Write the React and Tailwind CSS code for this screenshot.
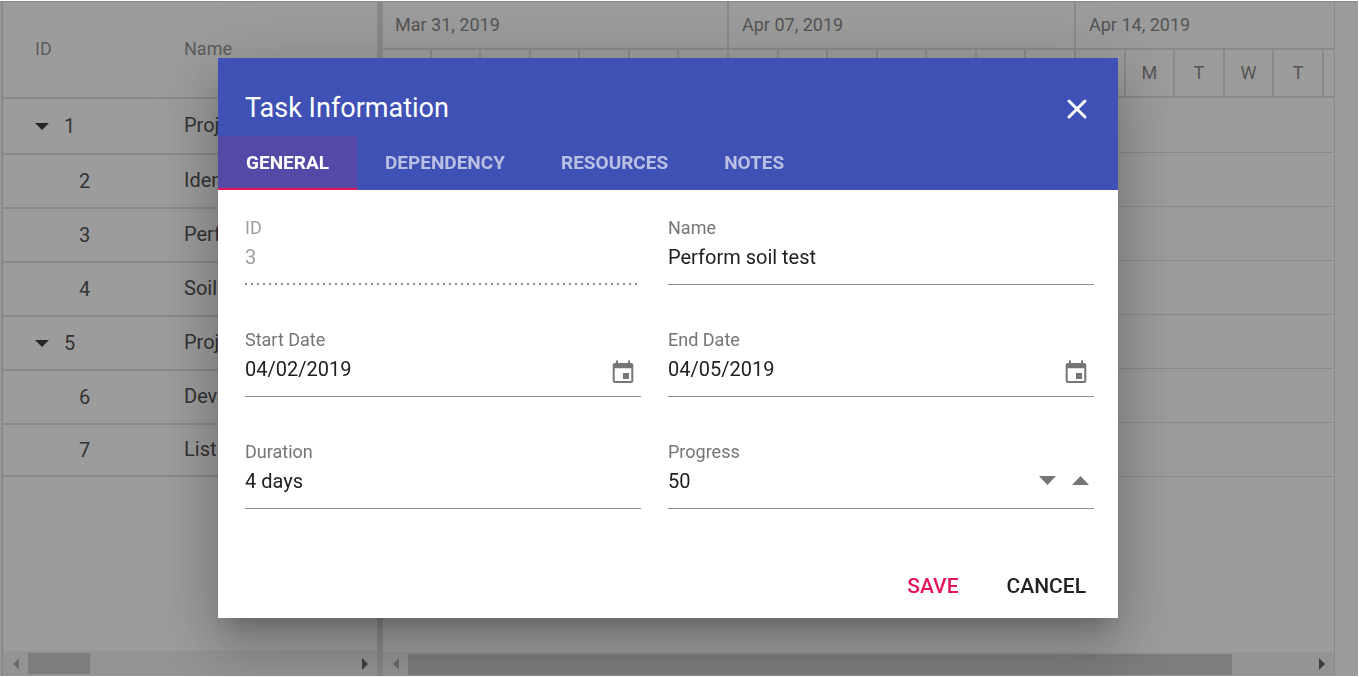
import React, { useState } from "react";

const tasks = [
  { id: 1, name: "Project Initiation", parent: true },
  { id: 2, name: "Identify Site location" },
  { id: 3, name: "Perform soil test" },
  { id: 4, name: "Soil test approval" },
  { id: 5, name: "Project Estimation", parent: true },
  { id: 6, name: "Develop floor plan" },
  { id: 7, name: "List materials" },
];

const weeks = ["Mar 31, 2019", "Apr 07, 2019", "Apr 14, 2019"];
const days = ["S", "M", "T", "W", "T", "F", "S"];
const tabs = ["GENERAL", "DEPENDENCY", "RESOURCES", "NOTES"];

function Triangle({ points, className }) {
  return (
    <svg viewBox="0 0 16 16" className={className} fill="currentColor" aria-hidden="true">
      <polygon points={points} />
    </svg>
  );
}

function ScrollBar({ thumb, className }) {
  return (
    <div className={`flex shrink-0 items-center bg-[#949494] ${className}`}>
      <span className="flex w-[25px] shrink-0 justify-center text-[#6c6c6c]">
        <Triangle points="11,2 11,14 5,8" className="size-4" />
      </span>
      <div className="flex h-[21px] min-w-0 flex-1">
        <div className={`h-full bg-[#7d7d7d] ${thumb}`} />
      </div>
      <span className="flex w-[25px] shrink-0 justify-center text-[#3f3f3f]">
        <Triangle points="5,2 5,14 11,8" className="size-4" />
      </span>
    </div>
  );
}

function TaskGrid() {
  return (
    <section className="flex w-[374px] shrink-0 flex-col overflow-hidden">
      <table className="w-full table-fixed border-separate border-spacing-0 text-left">
        <thead>
          <tr className="text-[18px] text-[#5c5c5c]">
            <th className="h-[97px] w-[149px] border-b-2 border-[#8a8a8a] p-0 pb-0.5 pl-8 font-normal">ID</th>
            <th className="border-b-2 border-[#8a8a8a] p-0 pb-0.5 pl-8 font-normal">Name</th>
          </tr>
        </thead>
        <tbody className="text-[20px] text-[#333]">
          {tasks.map((t) => (
            <tr key={t.id} className="h-[54px] first:h-[56px] last:h-[52px]">
              <td className="border-b-2 border-[#8a8a8a] p-0">
                {t.parent ? (
                  <div className="flex items-center gap-[15px] pl-8">
                    <button type="button" aria-label={`Collapse task ${t.id}`} className="text-[#262626]">
                      <svg viewBox="0 0 14 8" className="h-2 w-3.5" fill="currentColor" aria-hidden="true">
                        <polygon points="0,1 14,1 7,8" />
                      </svg>
                    </button>
                    <span>{t.id}</span>
                  </div>
                ) : (
                  <div className="pl-[76px]">{t.id}</div>
                )}
              </td>
              <td className="truncate border-b-2 border-[#8a8a8a] p-0 pb-0.5 pl-8">{t.name}</td>
            </tr>
          ))}
        </tbody>
      </table>
      <ScrollBar className="mt-auto h-[25px]" thumb="w-[62px]" />
    </section>
  );
}

function Timeline() {
  return (
    <section className="flex min-w-0 flex-1 flex-col overflow-hidden border-r border-[#8a8a8a]">
      <div className="-ml-px flex">
        {weeks.map((w) => (
          <div key={w} className="w-[347px] shrink-0">
            <div className="flex h-12 items-center border-r-2 border-b-2 border-[#8a8a8a] pb-0.5 pl-[13px] text-[18px] text-[#545454]">
              {w}
            </div>
            <div className="grid grid-cols-7">
              {days.map((d, i) => (
                <div
                  key={i}
                  className="flex h-12 items-center justify-center border-r-2 border-b-2 border-[#8a8a8a] pb-0.5 text-[18px] text-[#545454]"
                >
                  {d}
                </div>
              ))}
            </div>
          </div>
        ))}
      </div>
      {tasks.map((t) => (
        <div key={t.id} className="h-[54px] border-b border-[#8a8a8a] nth-2:h-[55px]" />
      ))}
      <ScrollBar className="mt-auto h-6" thumb="w-[91.4%]" />
    </section>
  );
}

function CalendarIcon() {
  return (
    <svg viewBox="0 0 22 24" className="h-6 w-[22px]" aria-hidden="true">
      <path
        fill="#757575"
        fillRule="evenodd"
        d="M4 0.5h2V3h10V0.5h2V3h1a2.3 2.3 0 0 1 2.3 2.3v15.4A2.3 2.3 0 0 1 19 23H3a2.3 2.3 0 0 1-2.300-2.300V5.300A2.300 2.300 0 0 1 3 3h1zM2.700 8.300v12.700h16.600V8.300zM11 13h6v6h-6z"
      />
    </svg>
  );
}

function Field({ id, label, value, disabled, children }) {
  return (
    <div
      className={
        disabled ? "mr-[3px] text-[#9e9e9e]" : "border-b border-[#8c8c8c] text-[#757575]"
      }
    >
      <label htmlFor={id} className="block text-[18px] leading-5">
        {label}
      </label>
      <div className={`flex items-start ${disabled ? "h-[45px]" : "h-[46px]"}`}>
        <input
          id={id}
          defaultValue={value}
          disabled={disabled}
          className={`h-[38px] min-w-0 flex-1 bg-transparent text-[20px] outline-none ${disabled ? "text-[#9e9e9e]" : "text-[#212121]"}`}
        />
        {children}
      </div>
      {disabled && (
        <svg className="block h-0.5 w-full" aria-hidden="true">
          <line x1="0" y1="1" x2="100%" y2="1" stroke="#8c8c8c" strokeWidth="2" strokeDasharray="2 4" />
        </svg>
      )}
    </div>
  );
}

function DateButton({ label }) {
  return (
    <button type="button" aria-label={label} className="mt-[10px] mr-[7px]">
      <CalendarIcon />
    </button>
  );
}

function TaskDialog() {
  const [active, setActive] = useState("GENERAL");
  return (
    <div
      role="dialog"
      aria-labelledby="dialog-title"
      className="w-[900px] max-w-full bg-white shadow-[0_15px_20px_-9px_rgba(0,0,0,0.2),0_32px_51px_4px_rgba(0,0,0,0.14),0_12px_62px_11px_rgba(0,0,0,0.12)]"
    >
      <header className="bg-[#3f51b5] text-white">
        <div className="flex h-[78px] items-center justify-between pt-[22px] pr-[30px] pl-[27px]">
          <h2 id="dialog-title" className="text-[27px]">
            Task Information
          </h2>
          <button type="button" aria-label="Close" className="pt-0.5">
            <svg viewBox="0 0 22 22" className="size-[22px]" aria-hidden="true">
              <path d="M3 3l16 16M19 3L3 19" stroke="currentColor" strokeWidth="3" strokeLinecap="round" />
            </svg>
          </button>
        </div>
        <div role="tablist" className="flex">
          {tabs.map((t) => (
            <button
              key={t}
              type="button"
              role="tab"
              aria-selected={t === active}
              onClick={() => setActive(t)}
              className={`h-[54px] border-b-2 px-7 pt-0.5 text-[19px] font-bold ${
                t === active ? "border-[#e3165b] bg-[#5549a8] text-white" : "border-transparent text-[#b9c0e4]"
              }`}
            >
              {t}
            </button>
          ))}
        </div>
      </header>
      <form onSubmit={(e) => e.preventDefault()}>
        <div className="grid grid-cols-[396fr_426fr] gap-x-[27px] gap-y-[45px] pt-7 pr-6 pl-[27px]">
          <Field id="task-id" label="ID" value="3" disabled />
          <Field id="task-name" label="Name" value="Perform soil test" />
          <Field id="task-start" label="Start Date" value="04/02/2019">
            <DateButton label="Choose start date" />
          </Field>
          <Field id="task-end" label="End Date" value="04/05/2019">
            <DateButton label="Choose end date" />
          </Field>
          <Field id="task-duration" label="Duration" value="4 days" />
          <Field id="task-progress" label="Progress" value="50">
            <div className="mt-3 mr-[5px] flex gap-4 text-[#757575]">
              <button type="button" aria-label="Decrease progress">
                <svg viewBox="0 0 17 12" className="h-3 w-[17px]" fill="currentColor" aria-hidden="true">
                  <polygon points="0,2 17,2 8.5,11" />
                </svg>
              </button>
              <button type="button" aria-label="Increase progress">
                <svg viewBox="0 0 17 12" className="h-3 w-[17px]" fill="currentColor" aria-hidden="true">
                  <polygon points="0,11 17,11 8.5,2" />
                </svg>
              </button>
            </div>
          </Field>
        </div>
        <div className="flex justify-end gap-4 pt-[51px] pr-4 pb-1">
          <button type="submit" className="h-[54px] px-4 text-[21px] font-medium text-[#e3165b]">
            SAVE
          </button>
          <button type="button" className="h-[54px] px-4 text-[21px] font-medium text-[#212121]">
            CANCEL
          </button>
        </div>
      </form>
    </div>
  );
}

export default function App() {
  return (
    <div className="flex min-h-screen flex-col bg-white py-px pr-px font-[Roboto,sans-serif]">
      <main className="flex flex-1 border-t border-[#8a8a8a] bg-[#9c9c9c] pr-[23px] pl-px">
        <div className="w-0.5 shrink-0 bg-[#8a8a8a]" />
        <TaskGrid />
        <div className="w-1.5 shrink-0 bg-[#888]" />
        <Timeline />
      </main>
      <div className="fixed inset-0 flex items-center justify-center pr-[23px] pb-px">
        <TaskDialog />
      </div>
    </div>
  );
}
